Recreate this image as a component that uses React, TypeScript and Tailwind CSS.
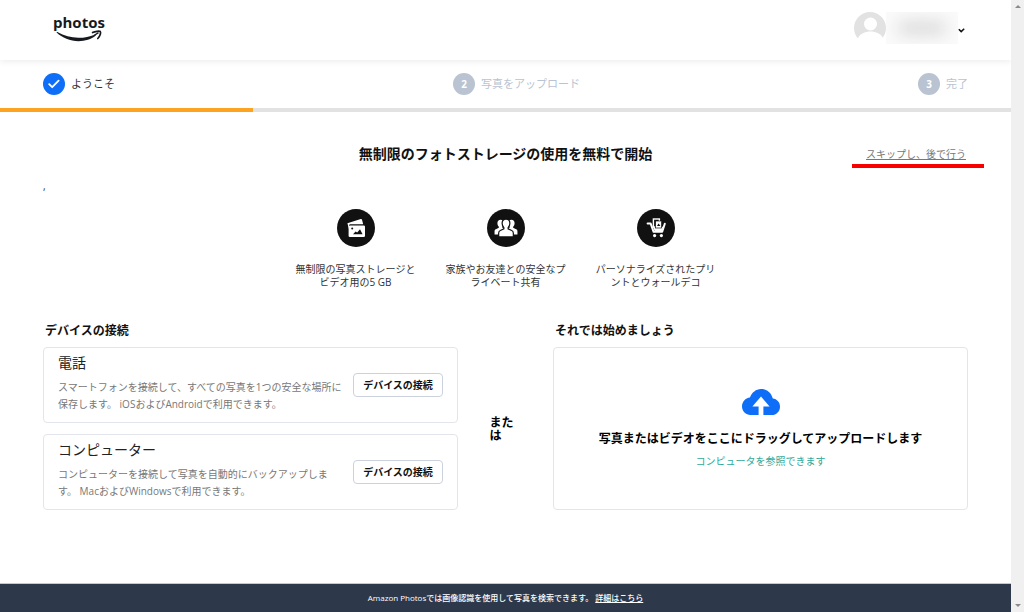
import { ReactNode } from "react";

interface IStep {
  label: string;
  done: boolean;
}

interface IFeature {
  text: string;
  icon: ReactNode;
}

interface IDevice {
  title: string;
  description: string;
}

const steps: IStep[] = [
  { label: "ようこそ", done: true },
  { label: "写真をアップロード", done: false },
  { label: "完了", done: false },
];

const features: IFeature[] = [
  { text: "無制限の写真ストレージとビデオ用の5 GB", icon: <PhotosIcon /> },
  { text: "家族やお友達との安全なプライベート共有", icon: <PeopleIcon /> },
  { text: "パーソナライズされたプリントとウォールデコ", icon: <CartIcon /> },
];

const devices: IDevice[] = [
  {
    title: "電話",
    description:
      "スマートフォンを接続して、すべての写真を1つの安全な場所に\n保存します。 iOSおよびAndroidで利用できます。",
  },
  {
    title: "コンピューター",
    description:
      "コンピューターを接続して写真を自動的にバックアップしま\nす。 MacおよびWindowsで利用できます。",
  },
];

function PhotosIcon() {
  return (
    <svg viewBox="0 0 38 38" className="w-full h-full" aria-hidden="true">
      <path d="M10.400 14.200 23.800 10a1 1 0 0 1 1.200.7L26.200 15.200H13l-1 .8V20Z" fill="#fff" />
      <rect x="11.600" y="16.400" width="16.400" height="11.600" rx="1.200" fill="#fff" />
      <circle cx="15.200" cy="19.600" r="1" fill="#111" />
      <path d="M16 25.200 18.600 22.400l1.600 1.200 2.800-3.400 2.600 5Z" fill="#111" />
    </svg>
  );
}

function PeopleIcon() {
  const body =
    "M0-9c2.400 0 3.800 1.700 3.800 4.200 0 1.800-.7 3.300-1.700 4.200v1.300L5.600 2.300C6.800 2.800 7.200 3.600 7.200 5v3.600H-7.200V5c0-1.400.4-2.200 1.600-2.700L-2.100.7V-.6C-3.100-1.500-3.800-3-3.800-4.800-3.800-7.300-2.400-9 0-9Z";
  return (
    <svg viewBox="0 0 38 38" className="w-full h-full" aria-hidden="true">
      <g fill="#fff">
        <path d={body} transform="translate(13.600 18.200) scale(.84)" />
        <path d={body} transform="translate(24.400 18.200) scale(.84)" />
        <path
          d={body}
          transform="translate(19 19.200) scale(1.020)"
          stroke="#111"
          strokeWidth="1.200"
        />
      </g>
    </svg>
  );
}

function CartIcon() {
  return (
    <svg viewBox="0 0 38 38" className="w-full h-full" aria-hidden="true">
      <path
        d="M10.600 14.400h3l3 8.400h8.600l2.600-8"
        fill="none"
        stroke="#fff"
        strokeWidth="2"
        strokeLinecap="round"
        strokeLinejoin="round"
      />
      <path d="M15.400 16.400 17.600 22h7.200l2-5.600-2.400 2.400h-6Z" fill="#fff" />
      <rect x="16.400" y="10" width="6" height="8" fill="none" stroke="#fff" strokeWidth="1.400" />
      <rect x="18.600" y="12" width="6" height="7" fill="#fff" stroke="#111" strokeWidth=".7" />
      <path d="m20 17 1.600-2.600 1.800 2.600Z" fill="#111" />
      <circle cx="17.600" cy="26.600" r="1.600" fill="#fff" />
      <circle cx="24.400" cy="26.600" r="1.600" fill="#fff" />
    </svg>
  );
}

function CloudUploadIcon() {
  return (
    <svg viewBox="0 0 38 26" className="w-[38px] h-[26px]" aria-hidden="true">
      <path
        d="M8.500 26C3.800 26 0 22.200 0 17.500 0 12.800 3.400 9 7.900 8.500 9.900 3.500 14 0 19 0c5.800 0 10.600 4 11.800 9.600C35 10 38 13.500 38 17.700 38 22.300 34.400 26 29.800 26H21.400V17.400h6.200L19 7.600 10.400 17.400h6.200V26Z"
        fill="#0f6ef8"
      />
    </svg>
  );
}

function Header() {
  return (
    <header className="flex items-center justify-between h-[60px] pb-1 pl-[53px] pr-[46px] shadow-[0_2px_6px_rgba(0,0,0,0.07)]">
      <a href="#" className="flex flex-col items-center text-[#16191f]">
        <span className="text-[15px] leading-4 font-bold">photos</span>
        <svg viewBox="0 0 46 12" className="w-[46px] h-3" aria-hidden="true">
          <path d="M.6 2.600C.3 2.100.8 1.700 1.400 2.100 8 5.800 15 7.800 22.500 7.800c6 0 11.300-1.200 16.200-3.100.9-.4 1.500.6.8 1.100C35.500 9.200 29 11.200 22.600 11.200 14 11.200 6.200 8 .6 2.600Z" fill="currentColor" />
          <path d="M36.600 2.500C39 1.200 43.600.9 44.300 1.500c.7.700.1 4.500-2.500 7" fill="none" stroke="currentColor" strokeWidth="1.700" strokeLinecap="round" />
          <path d="M38 5.500 42.500 2.600" stroke="currentColor" strokeWidth="1.400" />
        </svg>
      </a>
      <button type="button" aria-label="アカウント" className="flex items-center">
        <svg viewBox="0 0 32 32" className="w-8 h-8" aria-hidden="true">
          <circle cx="16" cy="16" r="16" fill="#e2e2e2" />
          <circle cx="16.500" cy="12" r="6.500" fill="#fff" />
          <path d="M3.500 27C6 21.500 11 19.500 16.500 19.500S27 21.500 29.500 27C26 31 21 33 16.500 33S7 31 3.500 27Z" fill="#fff" />
        </svg>
        <span className="flex items-center justify-center w-[72px] h-8 overflow-hidden bg-[#fafafa]">
          <span className="w-12 h-3 rounded-full bg-[#d6d6d6] blur-[8px]" />
        </span>
        <svg viewBox="0 0 7 5" className="w-[7px] h-[5px] mt-1" aria-hidden="true">
          <path d="m.8 1.200 2.400 2.400L6.200.8" fill="none" stroke="#111" strokeWidth="1.500" />
        </svg>
      </button>
    </header>
  );
}

function Steps() {
  return (
    <nav>
      <ol className="flex items-center justify-between h-12 px-[43px]">
        {steps.map((step, index) => (
          <li key={step.label} className="flex items-center gap-1.5">
            {step.done ? (
              <span className="flex items-center justify-center w-[22px] h-[22px] rounded-full bg-[#0f6ef8]">
                <svg viewBox="0 0 12 10" className="w-3 h-2.5" aria-hidden="true">
                  <path d="m1.200 5.200 3 3 6.400-6.600" fill="none" stroke="#fff" strokeWidth="1.800" strokeLinecap="round" strokeLinejoin="round" />
                </svg>
              </span>
            ) : (
              <span className="flex items-center justify-center w-[22px] h-[22px] rounded-full bg-[#b9c3d1] text-white text-[10px] font-bold">
                {index + 1}
              </span>
            )}
            <span className={step.done ? "text-[11px] text-[#333]" : "text-[11px] text-[#b9c3d1]"}>
              {step.label}
            </span>
          </li>
        ))}
      </ol>
      <div className="h-1 bg-[#e2e2e2]">
        <div className="h-full w-1/4 bg-[#fca321]" />
      </div>
    </nav>
  );
}

function DeviceCard({ device }: { device: IDevice }) {
  return (
    <article className="flex items-center justify-between gap-1 flex-1 px-3.5 border border-[#e4e5ec] rounded">
      <div className="flex flex-col gap-1.5 pb-1">
        <h3 className="text-sm leading-5 text-[#222]">{device.title}</h3>
        <p className="text-[10px] leading-[17px] whitespace-pre-line text-[#777]">
          {device.description}
        </p>
      </div>
      <button
        type="button"
        className="shrink-0 w-[90px] h-6 border border-[#cbd2de] rounded text-[10px] leading-[13px] font-bold text-[#111]"
      >
        デバイスの接続
      </button>
    </article>
  );
}

function ScrollTrack() {
  return (
    <div className="flex flex-col items-center justify-between w-[13px] py-1 bg-[#f0f0f0]" aria-hidden="true">
      <svg viewBox="0 0 6 6" className="w-1.5 h-1.5">
        <path d="M3 1 6 4H0Z" fill="#8a8a8a" />
      </svg>
      <svg viewBox="0 0 6 6" className="w-1.5 h-1.5">
        <path d="M3 5 0 2h6Z" fill="#8a8a8a" />
      </svg>
    </div>
  );
}

export default function App() {
  return (
    <div
      lang="ja"
      className="flex min-h-screen bg-white font-['Open_Sans','Noto_Sans_CJK_JP',sans-serif]"
    >
      <div className="flex flex-col flex-1 min-w-0">
        <Header />
        <Steps />

        <main className="px-[43px] pt-8 pb-8">
          <div className="grid grid-cols-[1fr_auto_1fr] items-center h-5">
            <h1 className="col-start-2 text-sm leading-5 font-bold text-[#111]">
              無制限のフォトストレージの使用を無料で開始
            </h1>
            <div className="relative justify-self-end pr-0.5">
              <a href="#" className="block text-[10px] leading-4 text-[#777] underline">
                スキップし、後で行う
              </a>
              <span className="absolute top-[18px] -left-3.5 -right-4 h-1 bg-[#f80000]" />
            </div>
          </div>
          <p className="mt-3.5 text-[10px] leading-4 text-[#333]">,</p>

          <ul className="flex justify-center mt-[15px]">
            {features.map((feature) => (
              <li key={feature.text} className="flex flex-col items-center w-[150px]">
                <span className="w-[38px] h-[38px] rounded-full bg-[#111]">{feature.icon}</span>
                <span className="w-[124px] mt-4 text-[10px] leading-[13px] text-center text-[#333]">
                  {feature.text}
                </span>
              </li>
            ))}
          </ul>

          <div className="grid grid-cols-[1fr_95px_1fr] mt-8">
            <h2 className="pl-0.5 text-xs leading-5 font-bold text-[#111]">デバイスの接続</h2>
            <h2 className="col-start-3 pl-0.5 text-xs leading-5 font-bold text-[#111]">
              それでは始めましょう
            </h2>

            <section className="flex flex-col gap-[11px] h-[163px] mt-1.5">
              {devices.map((device) => (
                <DeviceCard key={device.title} device={device} />
              ))}
            </section>
            <div className="flex items-center justify-center mt-1.5">
              <span className="w-8 text-xs leading-[13px] font-bold text-black">または</span>
            </div>
            <section className="flex flex-col items-center justify-center mt-1.5 border border-[#e4e5ec] rounded">
              <CloudUploadIcon />
              <p className="mt-3.5 text-xs leading-5 font-bold text-black">
                写真またはビデオをここにドラッグしてアップロードします
              </p>
              <button type="button" className="mt-1 text-[10px] leading-4 text-[#2fa99b]">
                コンピュータを参照できます
              </button>
            </section>
          </div>
        </main>

        <footer className="mt-auto py-1.5 border-t border-[#c3c9d1] bg-[#2d394b] text-[8px] leading-4 text-center font-medium text-white">
          Amazon Photosでは画像認識を使用して写真を検索できます。{" "}
          <a href="#" className="underline">
            詳細はこちら
          </a>
        </footer>
      </div>
      <ScrollTrack />
    </div>
  );
}
